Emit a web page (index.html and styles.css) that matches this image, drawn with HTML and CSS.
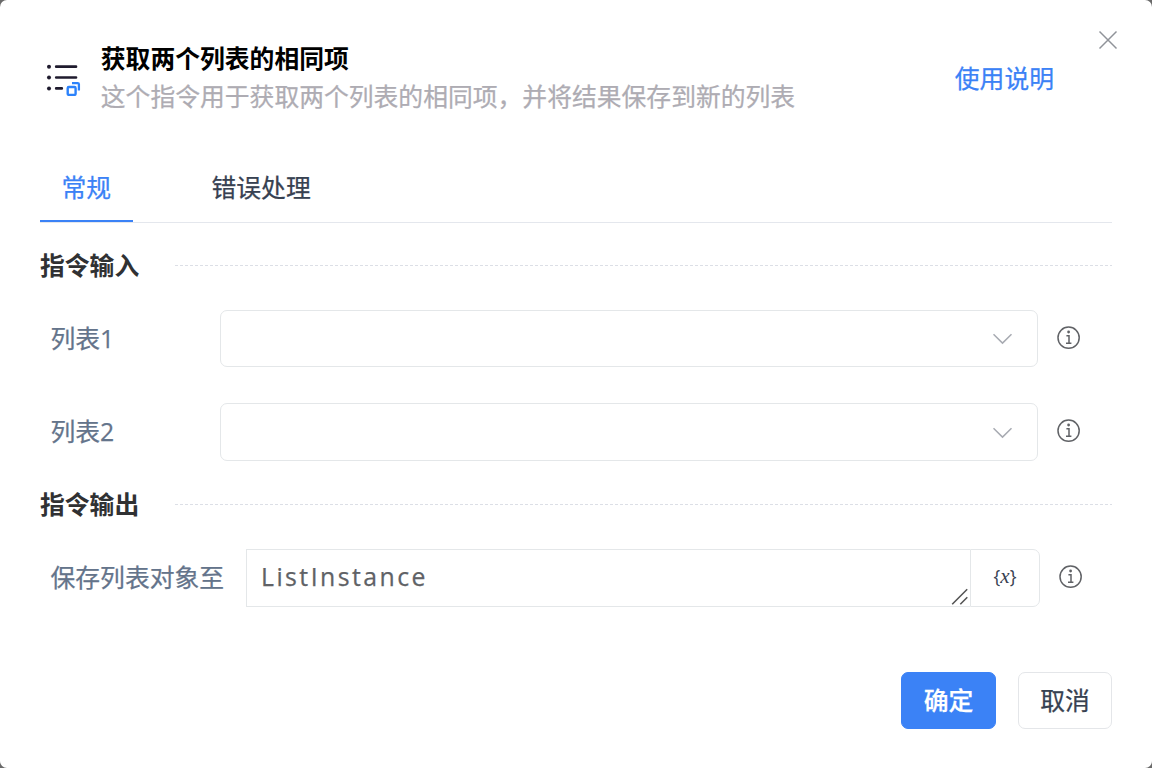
FILE: index.html
```html
<!DOCTYPE html>
<html lang="zh-CN">
<head>
<meta charset="utf-8">
<title>获取两个列表的相同项</title>
<link rel="stylesheet" href="styles.css">
</head>
<body>
<svg class="symbols" aria-hidden="true">
  <symbol id="info" viewBox="0 0 24 24">
    <circle cx="11.6" cy="11.7" r="10.6" fill="none" stroke="currentColor" stroke-width="1.5"/>
    <circle cx="11.6" cy="6" r="1.4" fill="currentColor"/>
    <path d="M9.4 9.8h2.6v7.4M9 17.2h5.4" fill="none" stroke="currentColor" stroke-width="1.5"/>
  </symbol>
  <symbol id="chevron" viewBox="0 0 20 12">
    <path d="M.5 1.2l9 8.9 9-8.9" fill="none" stroke="currentColor" stroke-width="1.5"/>
  </symbol>
</svg>
<main class="dialog">
  <header class="header">
    <svg class="list-icon" viewBox="0 0 36 36">
      <g fill="#1f1b2e"><circle cx="4" cy="6.7" r="2"/><circle cx="4" cy="17.5" r="2"/><circle cx="4" cy="28.4" r="2"/></g>
      <path d="M11.2 6.7H31M11.2 17.5H31M11.2 28.4h5.6" fill="none" stroke="#1f1b2e" stroke-width="2.7" stroke-linecap="round"/>
      <rect x="22.7" y="27" width="7.9" height="7.9" rx="1.2" fill="none" stroke="#2b82fb" stroke-width="2.4"/>
      <path d="M27 23.1h5.7q1.2 0 1.2 1.2v6.3" fill="none" stroke="#2b82fb" stroke-width="2.3"/>
    </svg>
    <div class="heading">
      <h1 class="title">获取两个列表的相同项</h1>
      <p class="description">这个指令用于获取两个列表的相同项，并将结果保存到新的列表</p>
    </div>
    <a class="help">使用说明</a>
    <svg class="close" viewBox="0 0 20 20"><path d="M1.5 1.5l17 17M18.5 1.5l-17 17" fill="none" stroke="currentColor" stroke-width="1.5"/></svg>
  </header>
  <nav class="tabs">
    <span class="tab tab-active">常规</span>
    <span class="tab">错误处理</span>
  </nav>
  <div class="section"><h2 class="section-title">指令输入</h2><i class="rule"></i></div>
  <div class="row row-first">
    <label class="label">列表1</label>
    <div class="select"><svg class="chevron"><use href="#chevron"/></svg></div>
    <svg class="info"><use href="#info"/></svg>
  </div>
  <div class="row row-second">
    <label class="label">列表2</label>
    <div class="select"><svg class="chevron"><use href="#chevron"/></svg></div>
    <svg class="info"><use href="#info"/></svg>
  </div>
  <div class="section section-output"><h2 class="section-title">指令输出</h2><i class="rule"></i></div>
  <div class="row row-output">
    <label class="label label-wide">保存列表对象至</label>
    <div class="input">
      <span class="value">ListInstance</span>
      <svg class="grip" viewBox="0 0 18 18"><path d="M1.2 16.3L16.2 1.3M9.3 16.3l7-7" fill="none" stroke="#555" stroke-width="1.6"/></svg>
    </div>
    <div class="variable">{<em class="x">x</em>}</div>
    <svg class="info"><use href="#info"/></svg>
  </div>
  <footer class="footer">
    <button class="button button-primary">确定</button>
    <button class="button">取消</button>
  </footer>
</main>
</body>
</html>
```
FILE: styles.css
```css
* { box-sizing: border-box; }
body {
  margin: 0;
  background: #6a6a6a;
  font-family: "Open Sans", "Noto Sans CJK SC", sans-serif;
  font-size: 24.8px;
  -webkit-text-stroke: 0.25px currentColor;
}
svg { display: block; flex: none; }
.symbols { position: absolute; width: 0; height: 0; }
.dialog {
  width: 1152px;
  height: 768px;
  padding: 39px 40px 0;
  border-radius: 7px;
  background: #fff;
  overflow: hidden;
}
.header { display: flex; height: 114px; }
.list-icon { width: 36px; height: 36px; margin: 21px 0 0 5px; }
.heading { flex: none; margin-left: 19.8px; width: 854px; white-space: nowrap; }
.title, .description { margin: 0; font-size: 24.8px; line-height: 38px; }
.title { font-weight: 700; color: #000; -webkit-text-stroke: 0; }
.description { color: #aeacb3; }
.help { flex: none; width: 99px; line-height: 38px; margin-top: 20px; color: #3b82f6; white-space: nowrap; }
.close { width: 20px; height: 20px; margin: -9.5px -7px 0 44px; color: #909399; }
.tabs { display: flex; height: 70px; border-bottom: 1px solid #e4e7ed; color: #374151; }
.tab { height: 69px; margin-left: 78.5px; line-height: 68px; }
.tab-active { width: 93px; margin-left: 0; padding-left: 21.5px; border-bottom: 2px solid #3b82f6; color: #3b82f6; }
.section { display: flex; align-items: center; height: 38px; margin-top: 23px; }
.section-title { width: 135px; margin: 0; font-size: 24.8px; line-height: 38px; font-weight: 700; color: #303133; -webkit-text-stroke: 0; }
.rule { flex: 1; height: 1px; margin-top: 1px; background: repeating-linear-gradient(90deg, #dcdfe6 0 3px, transparent 3px 5px); }
.row { display: flex; align-items: center; height: 57px; }
.row-first { margin-top: 26px; }
.row-second { height: 58px; margin-top: 36px; }
.label { width: 180px; padding: 0 0 3px 10.5px; color: #64748b; white-space: nowrap; }
.row-second .label, .row-output .label { padding-bottom: 5px; }
.label-wide { width: 206px; }
.select {
  display: flex;
  align-items: center;
  justify-content: flex-end;
  width: 818px;
  height: 100%;
  padding-right: 24px;
  border: 1px solid #e4e7e9;
  border-radius: 7px;
}
.chevron { width: 20px; height: 12px; margin-top: 1px; color: #a8abb2; }
.info { width: 24px; height: 24px; margin: -3px 0 0 19px; color: #606266; }
.row-first .info { margin-top: -2px; }
.section-output { margin-top: 24px; }
.row-output { height: 58px; margin-top: 26px; }
.input {
  display: flex;
  align-items: center;
  justify-content: space-between;
  width: 724px;
  height: 58px;
  padding-left: 14px;
  border: 1px solid #e4e7e9;
  border-right: 0;
  color: #606266;
}
.value { padding-bottom: 5px; letter-spacing: 2.45px; }
.grip { width: 18px; height: 18px; align-self: flex-end; margin-right: 1px; }
.variable {
  width: 70px;
  height: 58px;
  border: 1px solid #e4e7e9;
  border-radius: 0 7px 7px 0;
  color: #374151;
  font-size: 18px;
  line-height: 53px;
  text-align: center;
  -webkit-text-stroke: 0;
}
.x { font-family: "Liberation Serif", serif; font-size: 21px; font-style: italic; }
.footer { display: flex; justify-content: flex-end; gap: 22px; margin-top: 65px; }
.button {
  width: 94px;
  height: 57px;
  padding: 0 0 4px;
  border: 1px solid #e4e6e9;
  border-radius: 7px;
  background: #fff;
  color: #374151;
  font: inherit;
}
.button-primary { width: 95px; border-color: #3b82f6; background: #3b82f6; color: #fff; font-weight: 500; }
```
